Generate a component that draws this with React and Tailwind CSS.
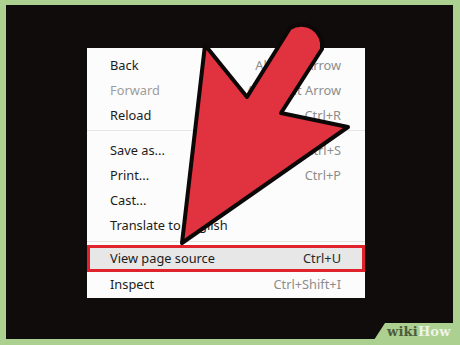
import React from "react";

const font = { fontFamily: '"Segoe UI", "Noto Sans", "Open Sans", sans-serif' };

function Row({ label, shortcut, dim }) {
  return (
    <div className="flex h-[25px] items-center justify-between pl-[23px] pr-[24px]">
      <span className={dim ? "text-[#9d9d9d]" : "text-[#1b1b1b]"}>{label}</span>
      {shortcut ? <span className="text-[#8d8d8d]">{shortcut}</span> : null}
    </div>
  );
}

function Sep({ cls }) {
  return (
    <div className={cls}>
      <div className="h-px bg-[#e6e6e6]" />
    </div>
  );
}

export default function App() {
  return (
    <div className="relative h-[345px] w-[460px] overflow-hidden bg-[#acd090] pb-[6px] pl-[6px] pr-[7px] pt-[5px]">
      <div className="h-full w-full bg-[#110c0c] pl-[81px] pt-[43px]">
        <div
          className="w-[278px] bg-[#fcfcfc] pb-[1px] pt-[5px] text-[12.8px] leading-none"
          style={font}
        >
          <Row label="Back" shortcut="Alt+Left Arrow" />
          <Row label="Forward" shortcut="Alt+Right Arrow" dim />
          <Row label="Reload" shortcut="Ctrl+R" />
          <Sep cls="pb-[7px] pt-[2px]" />
          <Row label="Save as..." shortcut="Ctrl+S" />
          <Row label="Print..." shortcut="Ctrl+P" />
          <Row label="Cast..." />
          <Row label="Translate to English" />
          <Sep cls="pb-[3px] pt-[3px]" />
          <div className="flex h-[27px] items-center justify-between border-[3px] border-[#e0222c] bg-[#e7e7e7] pl-[20px] pr-[21px]">
            <span className="text-[#1b1b1b]">View page source</span>
            <span className="text-[#2a2a2a]">Ctrl+U</span>
          </div>
          <Row label="Inspect" shortcut="Ctrl+Shift+I" />
        </div>
      </div>

      <svg
        className="pointer-events-none absolute left-0 top-0"
        width="460"
        height="345"
        viewBox="0 0 460 345"
      >
        <path
          d="M182 243 L205 45 L247 97 L290 28 A21 21 0 0 1 322 49 L281 113 L348 127 Z"
          fill="#e1323f"
          stroke="#0c0808"
          strokeWidth="4"
          strokeLinejoin="round"
        />
        <polygon points="374,340 385,323 453,323 453,340" fill="#acd090" />
      </svg>

      <div
        className="absolute left-[387px] top-[325px] flex text-[13px] font-bold leading-none tracking-[0.2px]"
        style={{ fontFamily: '"DejaVu Serif", "Liberation Serif", serif' }}
      >
        <span className="text-[#4c5c3c]">wiki</span>
        <span className="text-[#eef3e8]">How</span>
      </div>
    </div>
  );
}
